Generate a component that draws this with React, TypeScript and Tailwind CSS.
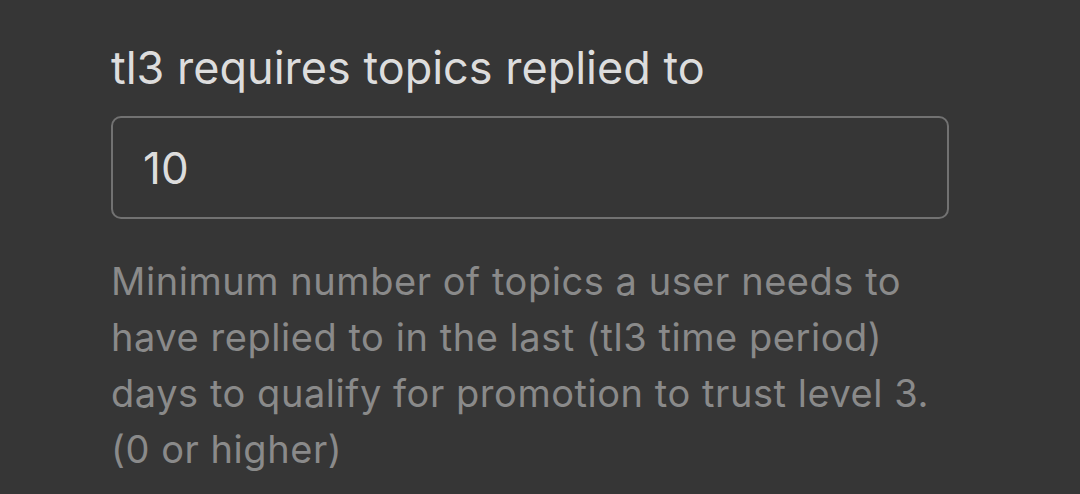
export default function App() {
  return (
    <div className="w-[1080px] h-[494px] bg-[#363636] overflow-hidden font-['Inter',sans-serif]">
      <div className="flex flex-col pl-[111px] pt-[40px] w-[949px]">
        <h2 className="text-[45px] leading-[56px] text-[#dddddd] font-normal">
          tl3 requires topics replied to
        </h2>
        <div className="mt-[20px] h-[103px] w-full flex items-center px-[30px] border-2 border-[#727272] rounded-[10px]">
          <input
            type="text"
            defaultValue="10"
            className="w-full bg-transparent outline-none text-[44px] text-[#dddddd]"
          />
        </div>
        <p className="mt-[34px] text-[38px] leading-[56px] tracking-[0.55px] text-[#8a8a8a] w-[850px]">
          Minimum number of topics a user needs to have replied to in the last
          (tl3 time period) days to qualify for promotion to trust level 3.
          (0 or higher)
        </p>
      </div>
    </div>
  );
}
